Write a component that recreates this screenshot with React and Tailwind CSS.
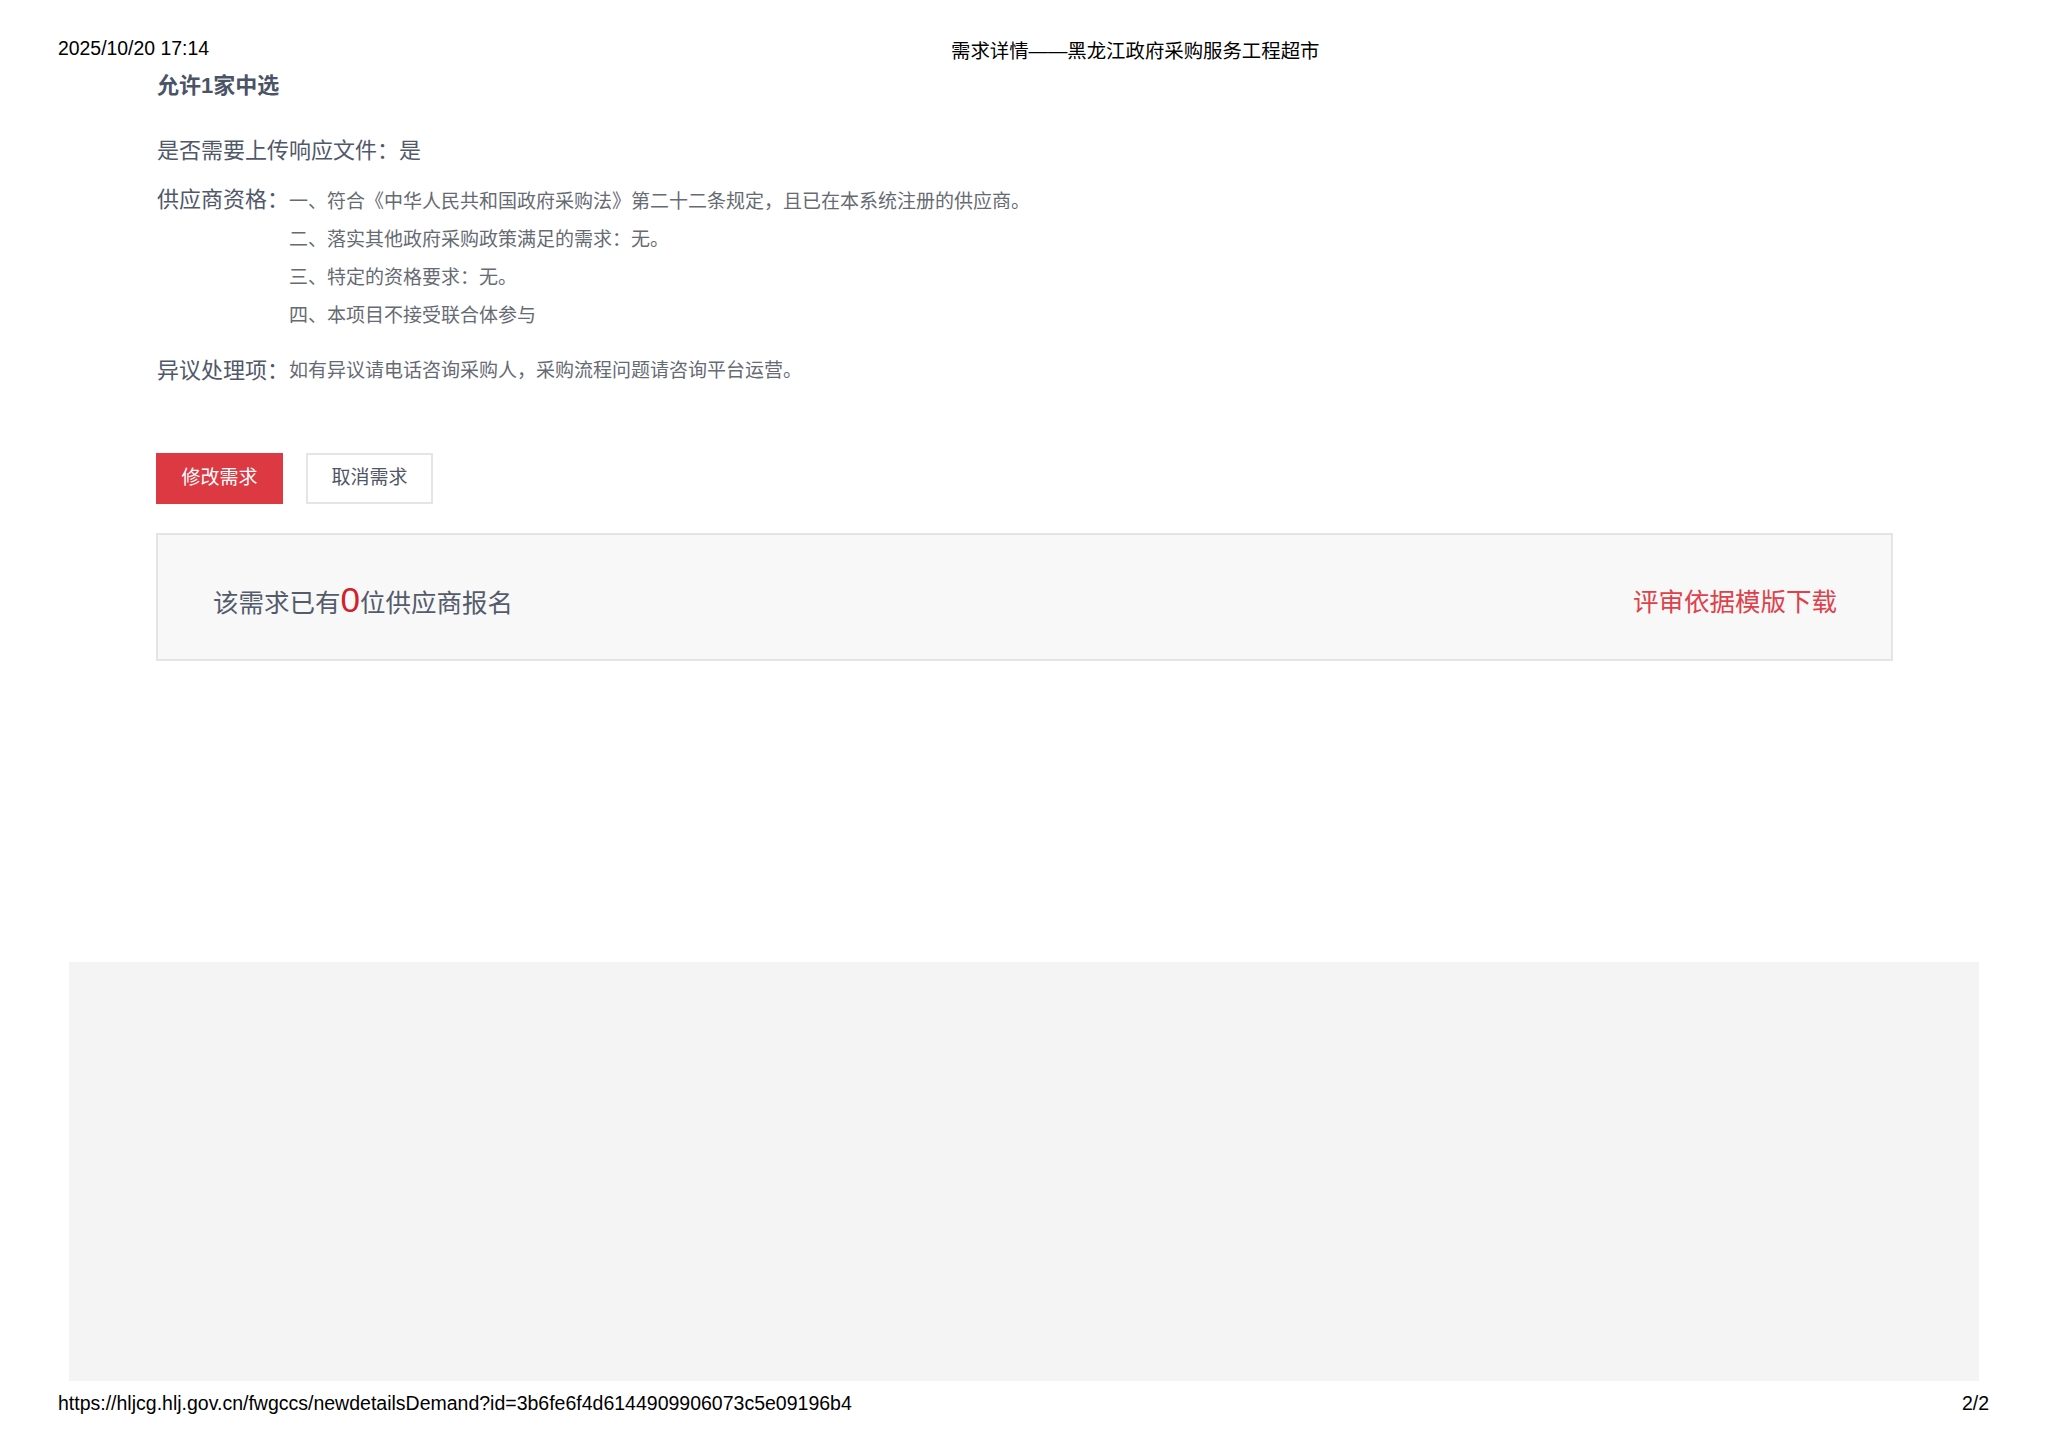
import React from 'react';

const cjk = "font-['Liberation_Sans','Noto_Sans_CJK_SC',sans-serif]";

const qualifications = [
  '一、符合《中华人民共和国政府采购法》第二十二条规定，且已在本系统注册的供应商。',
  '二、落实其他政府采购政策满足的需求：无。',
  '三、特定的资格要求：无。',
  '四、本项目不接受联合体参与',
];

const App = () => {
  return (
    <div className={`w-[2048px] h-[1447px] bg-white flex flex-col ${cjk}`}>
      {/* print header */}
      <div className="flex items-center pt-[36px] pl-[58px] h-[60px]">
        <span className="text-[19.4px] leading-[24px] text-black font-['Liberation_Sans',sans-serif] w-[893px]">
          2025/10/20 17:14
        </span>
        <span className="text-[19.4px] leading-[24px] text-black mt-[6px]">需求详情——黑龙江政府采购服务工程超市</span>
      </div>

      <div className="pl-[157px] flex flex-col">
        <div className="mt-[11px] text-[22px] leading-[30px] font-bold text-[#4b5366]">允许1家中选</div>

        <div className="mt-[35px] text-[22px] leading-[30px] text-[#505869]">是否需要上传响应文件：是</div>

        <div className="mt-[17px] flex">
          <span className="text-[22px] leading-[34px] text-[#505869] w-[132px] shrink-0">供应商资格：</span>
          <div className="flex flex-col">
            {qualifications.map((q) => (
              <div key={q} className="text-[19px] leading-[38px] text-[#666a73]">
                {q}
              </div>
            ))}
          </div>
        </div>

        <div className="mt-[17px] flex items-center h-[38px]">
          <span className="text-[22px] text-[#505869] w-[132px] shrink-0 leading-[34px]">异议处理项：</span>
          <span className="text-[19px] text-[#666a73] leading-[38px]">如有异议请电话咨询采购人，采购流程问题请咨询平台运营。</span>
        </div>
      </div>

      <div className="pl-[156px] mt-[63px] flex gap-[23px]">
        <button className="w-[127px] h-[51px] bg-[#dc3943] text-white text-[19px] flex items-center justify-center">
          修改需求
        </button>
        <button className="w-[127px] h-[51px] bg-white border-2 border-[#e4e4ea] text-[#4f5666] text-[19px] flex items-center justify-center">
          取消需求
        </button>
      </div>

      <div className="pl-[156px] mt-[29px]">
        <div className="w-[1737px] h-[128px] border-2 border-[#e4e4e4] bg-[#f8f8f8] flex items-center justify-between pl-[55px] pr-[54px] pt-[10px]">
          <div className="text-[25.5px] text-[#545b6c] flex items-baseline">
            <span>该需求已有</span>
            <span className="text-[35px] text-[#d0222c] font-['Liberation_Sans',sans-serif] leading-none">0</span>
            <span>位供应商报名</span>
          </div>
          <span className="text-[25.5px] text-[#e0404a]">评审依据模版下载</span>
        </div>
      </div>

      <div className="ml-[69px] mt-[301px] w-[1910px] h-[419px] bg-[#f4f4f4]" />

      {/* print footer */}
      <div className="mt-[11px] flex items-center justify-between pl-[58px] pr-[59px] h-[24px] font-['Liberation_Sans',sans-serif] text-[19.5px] text-black">
        <span>https://hljcg.hlj.gov.cn/fwgccs/newdetailsDemand?id=3b6fe6f4d6144909906073c5e09196b4</span>
        <span>2/2</span>
      </div>
    </div>
  );
};

export default App;
